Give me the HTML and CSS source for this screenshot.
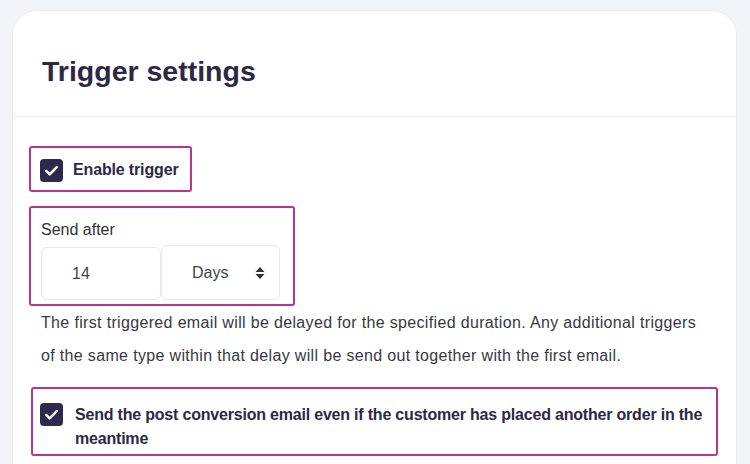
FILE: index.html
```html
<!DOCTYPE html>
<html>
<head>
<meta charset="utf-8">
<link rel="stylesheet" href="styles.css">
</head>
<body>
<div class="card">
  <div class="card-header">
    <h1 class="title">Trigger settings</h1>
  </div>
  <div class="card-body">
    <label class="hl hl-enable">
      <span class="check"><svg viewBox="0 0 24 24" width="23" height="23"><path d="M6.5 12.5l3.6 3.6 7.4-7.6" fill="none" stroke="#fff" stroke-width="2.6" stroke-linecap="round" stroke-linejoin="round"/></svg></span>
      <span class="check-label">Enable trigger</span>
    </label>
    <div class="hl hl-send">
      <div class="field-label">Send after</div>
      <div class="inputs">
        <div class="input num">14</div>
        <div class="input select">
          <span>Days</span>
          <svg class="arrows" viewBox="0 0 10 14" width="10" height="14"><path d="M5 1L9.5 6H0.5Z M5 13L9.5 8H0.5Z" fill="#333"/></svg>
        </div>
      </div>
    </div>
    <p class="help">The first triggered email will be delayed for the specified duration. Any additional triggers of the same type within that delay will be send out together with the first email.</p>
    <label class="hl hl-post">
      <span class="check"><svg viewBox="0 0 24 24" width="23" height="23"><path d="M6.5 12.5l3.6 3.6 7.4-7.6" fill="none" stroke="#fff" stroke-width="2.6" stroke-linecap="round" stroke-linejoin="round"/></svg></span>
      <span class="check-label">Send the post conversion email even if the customer has placed another order in the meantime</span>
    </label>
  </div>
</div>
</body>
</html>
```
FILE: styles.css
```css
html, body {
  margin: 0;
  padding: 0;
}
body {
  background: #f3f4f8;
  font-family: "Liberation Sans", Arial, sans-serif;
  color: #2d2945;
  height: 464px;
  overflow: hidden;
}
.card {
  margin: 10px 13px 0 12px;
  background: #fff;
  border: 1px solid #ebecf1;
  border-bottom: none;
  border-radius: 25px 25px 0 0;
  height: 470px;
  box-sizing: border-box;
}
.card-header {
  height: 106px;
  border-bottom: 1px solid #eeeff3;
  padding-left: 29px;
  box-sizing: border-box;
  display: flex;
  align-items: flex-start;
}
.title {
  margin: 42px 0 0;
  font-size: 28.5px;
  line-height: 36px;
  font-weight: bold;
  color: #2d2945;
}
.card-body {
  padding: 29px 0 0 16px;
}
.hl {
  border: 2px solid #b5358f;
  border-radius: 3px;
  box-sizing: border-box;
}
.hl-enable {
  display: flex;
  width: fit-content;
  align-items: center;
  gap: 10px;
  padding: 2px 12px 0 9px;
  height: 46px;
}
.check {
  width: 23px;
  height: 23px;
  flex: none;
  background: #2d2a4e;
  border-radius: 4px;
  display: flex;
}
.check-label {
  font-size: 16px;
  font-weight: bold;
  color: #2d2945;
  line-height: 24px;
  letter-spacing: -0.15px;
}
.hl-send {
  margin-top: 14px;
  width: 266px;
  height: 100px;
  padding: 12px 0 0 10px;
}
.field-label {
  font-size: 16px;
  line-height: 20px;
  color: #333;
}
.inputs {
  display: flex;
  margin-top: 5px;
}
.input {
  border: 1px solid #e8e8ee;
  border-radius: 6px;
  box-sizing: border-box;
  font-size: 16px;
  color: #444;
  display: flex;
  align-items: center;
}
.num {
  width: 120px;
  height: 53px;
  margin-top: 2px;
  padding-left: 30px;
}
.select {
  width: 119px;
  height: 55px;
  padding-left: 30px;
  padding-right: 14px;
  justify-content: space-between;
}
.arrows {
  display: block;
}
.help {
  margin: 0 0 15px;
  padding-left: 12px;
  padding-right: 30px;
  font-size: 16px;
  line-height: 33px;
  color: #38383e;
  letter-spacing: 0.34px;
}
.hl-post {
  display: flex;
  align-items: flex-start;
  gap: 12px;
  margin-left: 2px;
  width: 687px;
  height: 69px;
  padding: 14px 10px 0 7px;
}
.hl-post .check-label {
  letter-spacing: -0.2px;
}
```
